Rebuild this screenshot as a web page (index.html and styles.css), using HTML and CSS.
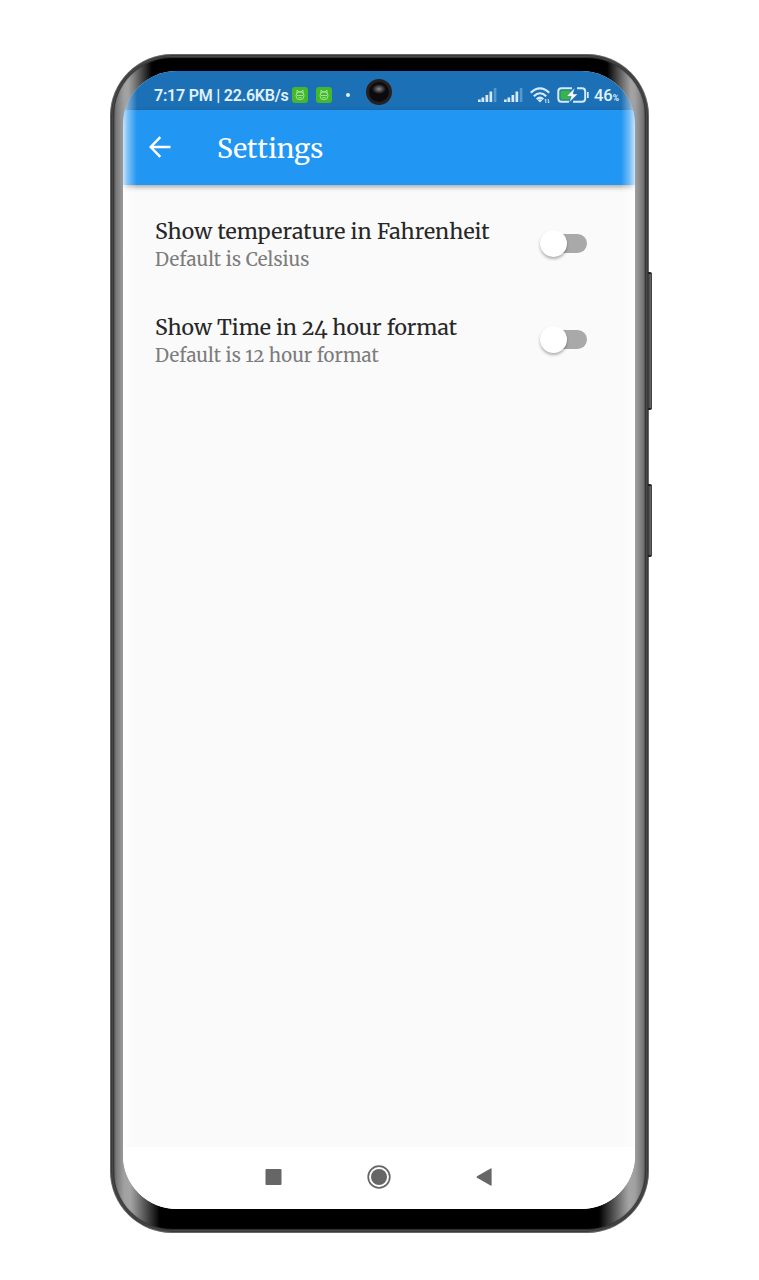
FILE: index.html
```html
<!DOCTYPE html>
<html lang="en">
<head>
<meta charset="utf-8">
<title>Settings</title>
<link rel="stylesheet" href="styles.css">
</head>
<body>
<div class="phone">
  <i class="side-button volume"></i>
  <i class="side-button power"></i>
  <main class="screen">
    <header class="status">
      <span class="clock">7:17 PM | 22.6KB/s</span>
      <svg class="app-icon" viewBox="0 0 16 16"><rect width="16" height="16" rx="3" fill="#43b82e"/><g fill="none" stroke="#b9ebab" stroke-width=".8"><circle cx="8" cy="8.8" r="4"/><path d="M4.800 6.500 5 3.200 7 4.800h2l2-1.600.2 3.300M5 8.500h6M6.300 10.700h3.400"/></g></svg>
      <svg class="app-icon second" viewBox="0 0 16 16"><rect width="16" height="16" rx="3" fill="#43b82e"/><g fill="none" stroke="#b9ebab" stroke-width=".8"><circle cx="8" cy="8.8" r="4"/><path d="M4.800 6.500 5 3.200 7 4.800h2l2-1.600.2 3.300M5 8.500h6M6.300 10.700h3.400"/></g></svg>
      <i class="dot"></i>
      <span class="indicators">
        <svg class="signal" viewBox="0 0 19 14"><path d="M0 11.500h2.700V14H0zM3.500 9.500h2.700V14H3.500zM7.500 7h2.700v7H7.500zM11.500 3.500h2.700V14h-2.700z" fill="#d5ebfb"/><path d="M15.800 0h2.600v14h-2.600z" fill="#5699cd"/></svg>
        <svg class="signal next" viewBox="0 0 19 14"><path d="M0 11.500h2.700V14H0zM3.500 9.500h2.700V14H3.500zM7.500 7h2.700v7H7.500zM11.500 3.500h2.700V14h-2.700z" fill="#d5ebfb"/><path d="M15.800 0h2.600v14h-2.600z" fill="#5699cd"/></svg>
        <svg class="wifi" viewBox="0 0 21 17"><g fill="none" stroke="#d5ebfb" stroke-width="2.200"><path d="M.8 5.800C6.500 0 13.500 0 19.200 5.800M3.800 9.200c3.800-3.700 8.600-3.700 12.400 0M6.700 12.300c2-1.900 4.600-1.900 6.600 0"/></g><path d="m7.700 13.200 2.300 2.400 2.300-2.400q-2.300-1.700-4.600 0z" fill="#d5ebfb"/><path d="M15.800 16v-4l-1 1.300M18.300 12v4l1-1.300" fill="none" stroke="#d5ebfb" stroke-width=".9"/></svg>
        <svg class="battery" viewBox="0 0 32 16"><rect x="3.500" y="3.500" width="10" height="9" rx="1" fill="#36b83f"/><path d="M15 1.300H4.500Q1.300 1.300 1.300 4.500v7q0 3.200 3.200 3.200H12M20 1.300h5q3.200 0 3.200 3.200v7q0 3.200-3.200 3.200h-9" fill="none" stroke="#d5ebfb" stroke-width="2"/><path d="M30 5h1.700v6H30z" fill="#d5ebfb"/><path d="M17.800.8 9.500 9.300h4.700l-2 6.200L20.700 7h-4.600z" fill="#fff" stroke="#1c70b6" stroke-width=".5"/></svg>
        <span class="percent">46<small>%</small></span>
      </span>
      <i class="camera"></i>
    </header>
    <nav class="appbar">
      <svg class="back" viewBox="0 0 22 22"><path d="M21.500 11H2M11.300 1.200 1.700 11l9.600 9.800" fill="none" stroke="#fff" stroke-width="2.500"/></svg>
      <h1>Settings</h1>
    </nav>
    <section class="settings">
      <div class="row">
        <div><h2 class="temp">Show temperature in Fahrenheit</h2><p class="celsius">Default is Celsius</p></div>
        <span class="switch"><i></i></span>
      </div>
      <div class="row">
        <div><h2 class="time">Show Time in 24 hour format</h2><p class="hours">Default is 12 hour format</p></div>
        <span class="switch"><i></i></span>
      </div>
    </section>
    <footer class="navigation">
      <svg viewBox="0 0 24 24"><rect x="3.500" y="4" width="16" height="16" rx="1" fill="#666"/></svg>
      <svg viewBox="0 0 24 24"><circle cx="12" cy="12" r="10.800" fill="none" stroke="#666" stroke-width="1.700"/><circle cx="12" cy="12" r="8" fill="#666"/></svg>
      <svg viewBox="0 0 24 24"><path d="M18.600 4v16q0 1-1 .5L4 12.800q-1-.8 0-1.600L17.600 3.500q1-.5 1 .5z" fill="#666"/></svg>
    </footer>
  </main>
</div>
</body>
</html>
```

FILE: styles.css
```css
* { box-sizing: border-box; }
body {
  margin: 0;
  height: 1280px;
  padding: 54px 0 0 110px;
  background: #fff;
  overflow: hidden;
}
h1, h2, p { margin: 0; font-weight: 390; white-space: nowrap; }
h1, h2, p {
  font-family: Merriweather, "DejaVu Serif Condensed", "DejaVu Serif", serif;
  font-optical-sizing: none;
  font-variant-numeric: oldstyle-nums;
}
svg { display: block; flex: none; }

.phone {
  position: relative;
  width: 539px;
  height: 1179px;
  padding: 17px 14px 24px 13px;
  border-radius: 62px;
  background:
    linear-gradient(90deg, transparent 18px, #000 42px, #000 calc(100% - 42px), transparent calc(100% - 18px)) top / 100% 50% no-repeat,
    linear-gradient(90deg, transparent 20px, #000 50px, #000 calc(100% - 50px), transparent calc(100% - 20px)) bottom / 100% 50% no-repeat,
    linear-gradient(90deg, #444 0, #555 4px, #777 6px, #a0a0a0 14px, #a8a8a8 24px, #a8a8a8 calc(100% - 24px), #a0a0a0 calc(100% - 14px), #777 calc(100% - 6px), #555 calc(100% - 4px), #444 100%);
  box-shadow: inset 0 0 0 1px #666, inset 0 0 0 2px #3a3a3a, inset 0 0 0 3px #484848, inset 0 0 1px 4px #333;
}
.side-button {
  position: absolute;
  left: 538px;
  width: 4px;
  border-radius: 0 2px 2px 0;
  background: linear-gradient(90deg, #333, #666 60%, #333);
  border-top: 2px solid #222;
  border-bottom: 2px solid #222;
}
.volume { top: 218px; height: 138px; }
.power { top: 430px; height: 73px; }

.screen {
  position: relative;
  height: 1138px;
  display: flex;
  flex-direction: column;
  overflow: hidden;
  border-radius: 54px;
  background: #fafafa;
}
.screen::after {
  content: "";
  position: absolute;
  inset: 0;
  background: linear-gradient(90deg, rgba(255,255,255,.75), rgba(255,255,255,.4) 5px, transparent 14px, transparent calc(100% - 14px), rgba(255,255,255,.4) calc(100% - 5px), rgba(255,255,255,.75));
}
.status {
  position: relative;
  flex: none;
  height: 39px;
  display: flex;
  align-items: center;
  padding: 9px 16px 0 31px;
  background: #1c70b6;
  color: #e1f1fd;
  font: 500 16px/20px Roboto, sans-serif;
}
.clock { width: 135px; padding-top: 2px; white-space: nowrap; font-weight: 600; letter-spacing: -.22px; }
.app-icon { width: 16px; height: 16px; margin-left: 3px; }
.second { margin-left: 8px; }
.dot { width: 4px; height: 4px; margin-left: 14px; border-radius: 50%; background: #e1f1fd; }
.indicators { display: flex; align-items: center; margin-left: auto; }
.signal { width: 19px; height: 14px; }
.next { margin-left: 7px; }
.wifi { width: 21px; height: 17px; margin-left: 7px; }
.battery { width: 32px; height: 16px; margin-left: 6px; }
.percent { margin-left: 5px; padding-top: 3px; font-size: 16.500px; white-space: nowrap; }
.percent small { font-size: 8.500px; font-weight: 700; }
.camera {
  position: absolute;
  left: 243px;
  top: 8px;
  width: 26px;
  height: 26px;
  border-radius: 50%;
  border: 3px solid #26211f;
  background: radial-gradient(ellipse 7px 5px at 50% 35%, #8c8b90, #414146 55%, #0b0b0f 100%);
}
.appbar {
  position: relative;
  flex: none;
  height: 75px;
  display: flex;
  align-items: center;
  padding-left: 26px;
  background: #2196f3;
  box-shadow: 0 2px 5px rgba(0,0,0,.35);
}
.back { width: 22px; height: 22px; margin-top: -1px; }
h1 { margin-left: 46px; padding-top: 2px; color: #fff; font-size: 26.600px; line-height: 36px; }
.settings { flex: 1; padding: 10px 48px 0 32px; }
.row { height: 96.500px; display: flex; align-items: center; justify-content: space-between; }
.row > div { padding-top: 4px; }
h2 { color: #272727; font-size: 21.300px; line-height: 28px; }
p { color: #7c7c7c; font-size: 18.600px; line-height: 27px; }
.temp { letter-spacing: .1px; }
.celsius { letter-spacing: .13px; }
.hours { letter-spacing: .1px; }
.switch {
  display: flex;
  align-items: center;
  width: 43px;
  height: 19px;
  border-radius: 10px;
  background: #a9a9a9;
}
.switch i {
  flex: none;
  width: 27px;
  height: 27px;
  margin-left: -4px;
  border-radius: 50%;
  background: #fff;
  box-shadow: 0 2px 3px rgba(0,0,0,.3);
}
.navigation {
  flex: none;
  height: 62px;
  display: flex;
  justify-content: center;
  gap: 81.500px;
  padding-top: 18px;
  background: #fff;
}
.navigation svg { width: 24px; height: 24px; }
```
